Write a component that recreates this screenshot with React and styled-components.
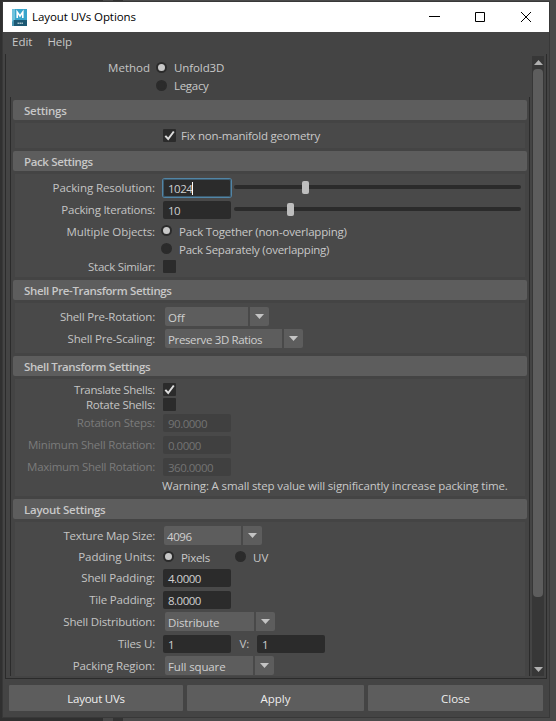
import React, { useState } from "react";
import styled, { createGlobalStyle, css } from "styled-components";

const GlobalStyle = createGlobalStyle`
  * {
    box-sizing: border-box;
  }

  html, body {
    margin: 0;
    height: 721px;
    overflow: hidden;
    background: #4a4a4a;
  }

  body {
    font-family: "Open Sans", "Noto Sans", sans-serif;
    font-size: 11.5px;
    line-height: 15px;
    color: #c8c8c8;
  }
`;

const Desktop = styled.div`
  width: 556px;
  height: 721px;
  padding: 2px 7px 4px 3px;
  background: linear-gradient(90deg, #303030 0 103px, #484848 103px 113px, #333 113px 123px, #4a4a4a 123px);
`;

const Window = styled.div`
  display: flex;
  flex-direction: column;
  width: 546px;
  height: 715px;
  background: #444;
  box-shadow: 0 0 0 1px #383838;
`;

const TitleBar = styled.div`
  display: flex;
  align-items: center;
  height: 30px;
  padding-left: 9px;
  background: #fff;
  color: #000;
`;

const Title = styled.div`
  flex: 1;
  padding: 0 0 1px 5px;
  letter-spacing: -0.08px;
  white-space: nowrap;
`;

const WindowButton = styled.div`
  display: flex;
  align-items: center;
  justify-content: center;
  width: 46px;
  height: 28px;
  padding-left: ${props => props.$pl || 0}px;
`;

const MenuBar = styled.div`
  display: flex;
  gap: 15px;
  height: 22px;
  padding: 2px 9px;
`;

const Frame = styled.div`
  display: flex;
  height: 625px;
  margin: 0 2px;
  border: solid #2b2b2b;
  border-width: 0 1px 1px;
`;

const Pane = styled.div`
  width: 526px;
  height: 622px;
  padding-left: 4px;
  overflow: hidden;
`;

const MethodGroup = styled.div`
  height: 43px;
  padding-top: 5px;
`;

const Sections = styled.div`
  width: 520px;
  height: 579px;
  padding: 3px 2px 0;
  border: solid #2b2b2b;
  border-width: 0 1px;
`;

const SectionHeader = styled.div`
  height: 20px;
  padding: 3px 0 0 11px;
  border-radius: 2px;
  background: #5d5d5d;
  color: #c8c8c8;
  font-weight: 600;
  letter-spacing: ${props => props.$track || 0}px;
`;

const SectionBody = styled.div`
  height: ${props => props.$h}px;
  margin: 3px 2px;
  padding-top: ${props => props.$top ?? 3}px;
  background: #494949;
`;

const Row = styled.div`
  display: flex;
  align-items: center;
  height: ${props => props.$h || 22}px;
`;

const Label = styled.div`
  align-self: flex-start;
  width: ${props => props.$w || 140}px;
  margin-top: ${props => props.$mt ?? 3}px;
  margin-right: ${props => props.$gap ?? 8}px;
  text-align: right;
  white-space: nowrap;
  letter-spacing: ${props => props.$track ?? -0.18}px;
  color: ${props => (props.$dim ? "#7b7b7b" : "#c4c4c4")};
`;

const Text = styled.span`
  align-self: flex-start;
  width: ${props => (props.$w ? props.$w + "px" : "auto")};
  margin-top: ${props => props.$mt || 0}px;
  margin-left: ${props => props.$ml || 0}px;
  white-space: nowrap;
  letter-spacing: ${props => props.$track || 0}px;
`;

const Field = styled.div`
  display: flex;
  align-items: flex-start;
  width: 68px;
  height: 18px;
  padding: 2px 0 0 5px;
  border-radius: 2px;
  background: #2b2b2b;
  color: #d0d0d0;
  letter-spacing: -0.5px;

  ${props => props.$focus && css`
    box-shadow: 0 0 0 1px #5285a6, inset 0 0 0 1px #3c5a6d;
  `}

  ${props => props.$dim && css`
    background: #404040;
    color: #737373;
  `}
`;

const Caret = styled.span`
  width: 1px;
  height: 13px;
  margin-top: 1px;
  background: #fff;
`;

const Track = styled.div`
  width: 287px;
  height: 4px;
  margin: 0 0 2px 3px;
  border-radius: 2px;
  background: #2b2b2b;
`;

const Handle = styled.div`
  width: 7px;
  height: 13px;
  margin-top: -4px;
  border-radius: 2px;
  background: #bdbdbd;
`;

const Box = styled.div`
  width: 13px;
  height: 13px;
  border-radius: 1px;
  background: #2b2b2b;
`;

const Dot = styled.div`
  width: 11px;
  height: 11px;
  margin-top: -1px;
  border-radius: 50%;
  border: 2px solid #2b2b2b;
  background: ${props => (props.$on ? "#c8c8c8" : "#2b2b2b")};
`;

const SelectBox = styled.div`
  display: flex;
  gap: 2px;
  height: 19px;
  margin: -1px 0 0 ${props => props.$ml ?? 2}px;
`;

const SelectValue = styled.div`
  width: ${props => props.$w}px;
  padding: 3px 0 0 3px;
  border-radius: 2px 0 0 2px;
  background: #5d5d5d;
  color: #cfcfcf;
  letter-spacing: ${props => props.$track || 0}px;
  white-space: nowrap;
`;

const SelectArrow = styled.div`
  display: flex;
  align-items: center;
  justify-content: center;
  width: 19px;
  border-radius: 0 2px 2px 0;
  background: #5d5d5d;
`;

const ScrollBar = styled.div`
  display: flex;
  flex-direction: column;
  align-items: center;
  width: 12px;
  height: 620px;
  margin-top: 2px;
  background: #373737;
`;

const ScrollCap = styled.div`
  display: flex;
  align-items: center;
  justify-content: center;
  height: 13px;
`;

const Thumb = styled.div`
  width: 10px;
  height: 528px;
  margin-bottom: 66px;
  border-radius: 4px;
  background: #5d5d5d;
`;

const Footer = styled.div`
  display: grid;
  grid-template-columns: 174px 177px 175px;
  gap: 4px;
  padding: 6px 6px;
`;

const Button = styled.div`
  display: flex;
  align-items: center;
  justify-content: center;
  height: 26px;
  padding-top: 1px;
  border-radius: 1px;
  background: #5d5d5d;
  color: #eee;
  letter-spacing: ${props => props.$track || 0}px;
`;

function AppIcon() {
  return (
    <svg width="15" height="17" viewBox="0 0 15 17">
      <rect width="15" height="17" fill="#37a5cc" />
      <path d="M0 0h3v13H0z" fill="#70c3dd" />
      <path d="M0 17v-3l2-3h13v6z" fill="#1c5873" />
      <path d="M0 13l2-2v6H0z" fill="#4796b3" />
      <path d="M5.2 9V3l2.8 4 2.8-4v6" fill="none" stroke="#fff" strokeWidth="1.6" />
      <path d="M5.5 14.2h5.5" stroke="#a7c3ce" strokeWidth="1.6" strokeDasharray="1.6 .4" />
    </svg>
  );
}

function Arrow({ up, color = "#c4c4c4" }) {
  return (
    <svg width="9" height="5" viewBox="0 0 9 5">
      <path d={up ? "M0 5L4.5 0L9 5z" : "M0 0h9L4.5 5z"} fill={color} />
    </svg>
  );
}

function Checkbox({ initial = false }) {
  const [checked, setChecked] = useState(initial);
  return (
    <Box onClick={() => setChecked(!checked)}>
      {checked && (
        <svg width="13" height="13" viewBox="0 0 13 13" style={{ display: "block" }}>
          <path d="M2.3 6.8l2.9 3.2L10.8 2.5" fill="none" stroke="#dcdcdc" strokeWidth="2" />
        </svg>
      )}
    </Box>
  );
}

function Select({ value, w, ml, track }) {
  return (
    <SelectBox $ml={ml}>
      <SelectValue $w={w} $track={track}>{value}</SelectValue>
      <SelectArrow><Arrow /></SelectArrow>
    </SelectBox>
  );
}

function Slider({ value }) {
  return (
    <Track>
      <Handle style={{ marginLeft: value }} />
    </Track>
  );
}

function Section({ title, h, top, track, children }) {
  return (
    <>
      <SectionHeader $track={track}>{title}</SectionHeader>
      <SectionBody $h={h} $top={top}>{children}</SectionBody>
    </>
  );
}

export default function App() {
  return (
    <>
      <GlobalStyle />
      <Desktop>
        <Window>
          <TitleBar>
            <AppIcon />
            <Title>Layout UVs Options</Title>
            <WindowButton $pl={1}>
              <svg width="11" height="10"><path d="M0 4.5h11" stroke="#000" /></svg>
            </WindowButton>
            <WindowButton>
              <svg width="10" height="10"><path d="M.5 .5h9v9h-9z" fill="none" stroke="#000" /></svg>
            </WindowButton>
            <WindowButton>
              <svg width="10" height="10"><path d="M0 0l10 10M10 0L0 10" stroke="#000" /></svg>
            </WindowButton>
          </TitleBar>

          <MenuBar>
            <Text>Edit</Text>
            <Text $track={-0.1}>Help</Text>
          </MenuBar>

          <Frame>
            <Pane>
              <MethodGroup>
                <Row $h={18}>
                  <Label $gap={6} $mt={1} $track={0}>Method</Label>
                  <Dot $on />
                  <Text $ml={7} $mt={1} $track={-0.1}>Unfold3D</Text>
                </Row>
                <Row $h={18}>
                  <Label $gap={6} />
                  <Dot />
                  <Text $ml={7} $mt={1} $track={-0.3}>Legacy</Text>
                </Row>
              </MethodGroup>

              <Sections>
                <Section title="Settings" h={25} top={0} track={-0.25}>
                  <Row $h={25}>
                    <Label />
                    <Checkbox initial />
                    <Text $ml={5} $mt={5} $track={-0.22}>Fix non-manifold geometry</Text>
                  </Row>
                </Section>

                <Section title="Pack Settings" h={103} track={-0.37}>
                  <Row>
                    <Label $track={-0.08}>Packing Resolution:</Label>
                    <Field $focus>1024<Caret /></Field>
                    <Slider value={68} />
                  </Row>
                  <Row>
                    <Label $track={-0.25}>Packing Iterations:</Label>
                    <Field>10</Field>
                    <Slider value={53} />
                  </Row>
                  <Row $h={20}>
                    <Label $gap={6} $track={-0.1}>Multiple Objects:</Label>
                    <Dot $on />
                    <Text $ml={7} $mt={3} $track={-0.2}>Pack Together (non-overlapping)</Text>
                  </Row>
                  <Row $h={16}>
                    <Label $gap={6} />
                    <Dot />
                    <Text $ml={7} $mt={1} $track={-0.25}>Pack Separately (overlapping)</Text>
                  </Row>
                  <Row $h={19}>
                    <Label $mt={2} $track={-0.3}>Stack Similar:</Label>
                    <Checkbox />
                  </Row>
                </Section>

                <Section title="Shell Pre-Transform Settings" h={50} track={-0.36}>
                  <Row>
                    <Label $track={-0.2}>Shell Pre-Rotation:</Label>
                    <Select value="Off" w={83} />
                  </Row>
                  <Row>
                    <Label>Shell Pre-Scaling:</Label>
                    <Select value="Preserve 3D Ratios" w={117} track={-0.36} />
                  </Row>
                </Section>

                <Section title="Shell Transform Settings" h={117} track={-0.38}>
                  <Row $h={15}>
                    <Label $mt={0} $track={-0.35}>Translate Shells:</Label>
                    <Checkbox initial />
                  </Row>
                  <Row $h={15}>
                    <Label $mt={0} $track={-0.22}>Rotate Shells:</Label>
                    <Checkbox />
                  </Row>
                  <Row>
                    <Label $dim>Rotation Steps:</Label>
                    <Field $dim>90.0000</Field>
                  </Row>
                  <Row>
                    <Label $dim $track={-0.2}>Minimum Shell Rotation:</Label>
                    <Field $dim>0.0000</Field>
                  </Row>
                  <Row>
                    <Label $dim $track={-0.27}>Maximum Shell Rotation:</Label>
                    <Field $dim>360.0000</Field>
                  </Row>
                  <Row $h={16}>
                    <Text $ml={147} $track={-0.15}>Warning: A small step value will significantly increase packing time.</Text>
                  </Row>
                </Section>

                <Section title="Layout Settings" h={154} track={-0.27}>
                  <Row>
                    <Label $track={-0.2}>Texture Map Size:</Label>
                    <Select value="4096" w={77} ml={1} track={-0.4} />
                  </Row>
                  <Row $h={20}>
                    <Label $mt={2} $track={-0.05}>Padding Units:</Label>
                    <Dot $on />
                    <Text $ml={7} $mt={3} $w={54} $track={-0.3}>Pixels</Text>
                    <Dot />
                    <Text $ml={7} $mt={3}>UV</Text>
                  </Row>
                  <Row>
                    <Label $track={-0.1}>Shell Padding:</Label>
                    <Field>4.0000</Field>
                  </Row>
                  <Row>
                    <Label>Tile Padding:</Label>
                    <Field>8.0000</Field>
                  </Row>
                  <Row>
                    <Label>Shell Distribution:</Label>
                    <Select value="Distribute" w={89} track={-0.17} />
                  </Row>
                  <Row>
                    <Label>Tiles U:</Label>
                    <Field>1</Field>
                    <Label $w={18}>V:</Label>
                    <Field>1</Field>
                  </Row>
                  <Row>
                    <Label $track={-0.1}>Packing Region:</Label>
                    <Select value="Full square" w={88} track={-0.13} />
                  </Row>
                </Section>
              </Sections>
            </Pane>

            <ScrollBar>
              <ScrollCap><Arrow up color="#b0b0b0" /></ScrollCap>
              <Thumb />
              <ScrollCap><Arrow color="#b0b0b0" /></ScrollCap>
            </ScrollBar>
          </Frame>

          <Footer>
            <Button $track={-0.25}>Layout UVs</Button>
            <Button>Apply</Button>
            <Button>Close</Button>
          </Footer>
        </Window>
      </Desktop>
    </>
  );
}
